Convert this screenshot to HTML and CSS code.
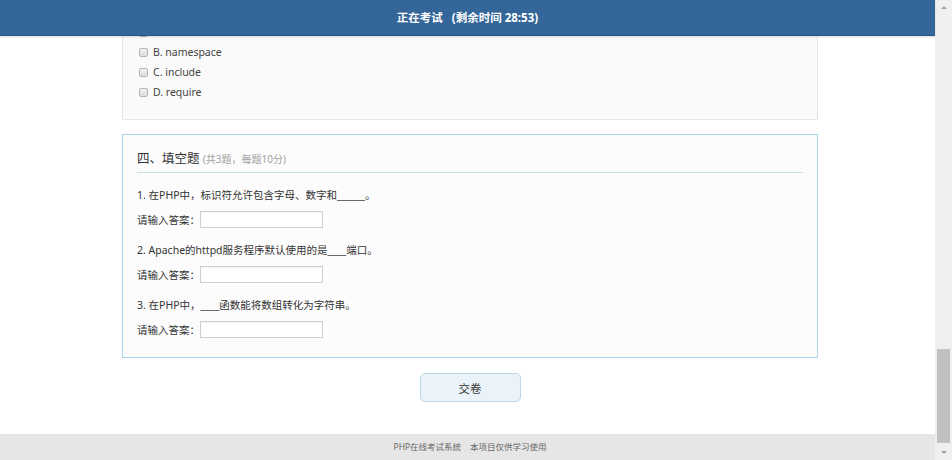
FILE: index.html
```html
<!DOCTYPE html>
<html lang="zh">
<head>
    <meta charset="UTF-8">
    <title>正在考试</title>
    <link rel="stylesheet" href="styles.css">
</head>
<body>
<div class="app">
    <div class="page">
        <!-- 顶部标题栏 -->
        <div class="topbar">正在考试&nbsp;&nbsp;&nbsp;(剩余时间 28:53)</div>

        <div class="content">
            <!-- 多选题（上半部分已滚出） -->
            <div class="card card-cut">
                <label class="option"><input type="checkbox"> A. use</label>
                <label class="option"><input type="checkbox"> B. namespace</label>
                <label class="option"><input type="checkbox"> C. include</label>
                <label class="option"><input type="checkbox"> D. require</label>
            </div>

            <!-- 填空题 -->
            <div class="card card-blank">
                <div class="card-title">四、填空题 <small>(共3题，每题10分)</small></div>
                <div class="item">
                    <p class="question">1. 在PHP中，标识符允许包含字母、数字和______。</p>
                    <div class="answer">请输入答案：<input type="text"></div>
                </div>
                <div class="item">
                    <p class="question">2. Apache的httpd服务程序默认使用的是____端口。</p>
                    <div class="answer">请输入答案：<input type="text"></div>
                </div>
                <div class="item">
                    <p class="question">3. 在PHP中，____函数能将数组转化为字符串。</p>
                    <div class="answer">请输入答案：<input type="text"></div>
                </div>
            </div>

            <div class="actions">
                <button class="submit-btn">交卷</button>
            </div>
        </div>

        <div class="footer">PHP在线考试系统&nbsp;&nbsp;&nbsp;&nbsp;本项目仅供学习使用</div>
    </div>

    <!-- 右侧滚动条 -->
    <div class="scrollbar">
        <span class="arrow up"></span>
        <div class="track"><div class="thumb"></div></div>
        <span class="arrow down"></span>
    </div>
</div>
</body>
</html>
```

FILE: styles.css
```css
/* 全局 */
* {
    box-sizing: border-box;
}

body {
    margin: 0;
    font-family: "Noto Sans", "Noto Sans CJK SC", sans-serif;
    font-size: 10.5px;
    color: #333;
    background: #fff;
}

.app {
    display: flex;
    height: 460px;
    overflow: hidden;
}

.page {
    width: 935px;
    display: flex;
    flex-direction: column;
}

/* 顶部栏 */
.topbar {
    height: 36px;
    line-height: 35px;
    background-color: #356699;
    border-bottom: 1px solid #2a5683;
    color: #fff;
    font-size: 11.5px;
    font-weight: bold;
    text-align: center;
    position: relative;
    z-index: 2;
    box-shadow: 0 1px 2px rgba(0, 0, 0, 0.15);
}

.content {
    flex: 1;
    padding-left: 5px;
    overflow: hidden;
}

/* 卡片 */
.card {
    width: 696px;
    margin: 0 auto;
    background: #fafafa;
    border: 1px solid #e6e6e6;
}

.card-cut {
    margin-top: -14px;
    padding: 0 15px 17px;
    border-top: none;
}

.option {
    display: flex;
    align-items: center;
    height: 20px;
    color: #444;
}

.option input {
    appearance: none;
    width: 9px;
    height: 9px;
    margin: 0 5px 0 1px;
    border: 1px solid #b5b5b5;
    border-radius: 2px;
    background: linear-gradient(#f2f2f2, #dcdcdc);
}

.card-blank {
    margin-top: 14px;
    padding: 11px 14px 18px;
    background: #fcfcfc;
    border-color: #a9d3ea;
}

.card-title {
    height: 27px;
    line-height: 26px;
    font-size: 12.5px;
    color: #333;
    border-bottom: 1px solid #cfe2ec;
}

.card-title small {
    font-size: 10px;
    color: #a0a0a0;
}

.item {
    margin-top: 11px;
}

.card-title + .item {
    margin-top: 12px;
}

.question {
    margin: 0;
    line-height: 20px;
}

.answer {
    margin-top: 4px;
    display: flex;
    align-items: center;
    height: 20px;
}

.answer input {
    width: 123px;
    height: 17px;
    margin: 0;
    padding: 0 3px;
    border: 1px solid #cfcfcf;
    box-shadow: inset 0 1px 1px rgba(0, 0, 0, 0.05);
    background: #fff;
}

/* 交卷按钮 */
.actions {
    display: flex;
    justify-content: center;
    margin-top: 15px;
}

.submit-btn {
    width: 101px;
    height: 29px;
    border: 1px solid #bcd9ea;
    border-radius: 5px;
    background: #e9f3f9;
    color: #333;
    font-family: inherit;
    font-size: 11.5px;
}

/* 页脚 */
.footer {
    height: 26px;
    line-height: 26px;
    padding-left: 5px;
    background: #e6e6e6;
    color: #666;
    font-size: 8.5px;
    text-align: center;
}

/* 滚动条 */
.scrollbar {
    width: 17px;
    background: #f0f0f0;
    display: flex;
    flex-direction: column;
    align-items: center;
}

.arrow {
    width: 0;
    height: 0;
    border-left: 3px solid transparent;
    border-right: 3px solid transparent;
    margin: 6px 0;
}

.arrow.up {
    border-bottom: 3px solid #a3a3a3;
}

.arrow.down {
    border-top: 3px solid #a3a3a3;
}

.track {
    flex: 1;
    width: 13px;
    display: flex;
    flex-direction: column;
    justify-content: flex-end;
}

.thumb {
    height: 94px;
    margin-bottom: 2px;
    background: #c1c1c1;
}
```
